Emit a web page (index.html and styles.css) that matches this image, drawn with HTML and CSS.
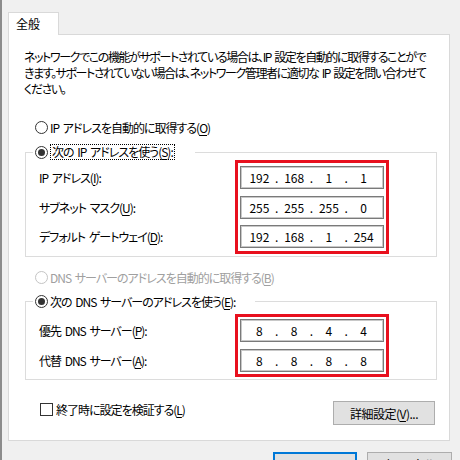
FILE: index.html
```html
<!DOCTYPE html>
<html lang="ja">
<head>
    <meta charset="UTF-8">
    <title>インターネット プロトコル バージョン 4 (TCP/IPv4) のプロパティ</title>
    <link rel="stylesheet" href="styles.css">
</head>
<body>
    <div class="window">
        <div class="tabs">
            <div class="tab">全般</div>
        </div>
        <div class="panel">
            <p class="intro">ネットワークでこの機能がサポートされている場合は、IP 設定を自動的に取得することがで<br>きます。サポートされていない場合は、ネットワーク管理者に適切な IP 設定を問い合わせて<br>ください。</p>

            <label class="option first">
                <input type="radio" name="ip-mode">
                <span>IP アドレスを自動的に取得する(<u>O</u>)</span>
            </label>

            <fieldset class="group ip-group">
                <legend>
                    <label class="option">
                        <input type="radio" name="ip-mode" checked>
                        <span class="focus">次の IP アドレスを使う(<u>S</u>):</span>
                    </label>
                </legend>
                <div class="group-body">
                    <div class="labels">
                        <div class="label-row">IP アドレス(<u>I</u>):</div>
                        <div class="label-row">サブネット マスク(<u>U</u>):</div>
                        <div class="label-row">デフォルト ゲートウェイ(<u>D</u>):</div>
                    </div>
                    <div class="marked">
                        <div class="ip-field"><span>192</span><span>.</span><span>168</span><span>.</span><span>1</span><span>.</span><span>1</span></div>
                        <div class="ip-field"><span>255</span><span>.</span><span>255</span><span>.</span><span>255</span><span>.</span><span>0</span></div>
                        <div class="ip-field"><span>192</span><span>.</span><span>168</span><span>.</span><span>1</span><span>.</span><span>254</span></div>
                    </div>
                </div>
            </fieldset>

            <label class="option dns-auto disabled">
                <input type="radio" name="dns-mode" disabled>
                <span>DNS サーバーのアドレスを自動的に取得する(<u>B</u>)</span>
            </label>

            <fieldset class="group dns-group">
                <legend>
                    <label class="option">
                        <input type="radio" name="dns-mode" checked>
                        <span>次の DNS サーバーのアドレスを使う(<u>E</u>):</span>
                    </label>
                </legend>
                <div class="group-body">
                    <div class="labels">
                        <div class="label-row">優先 DNS サーバー(<u>P</u>):</div>
                        <div class="label-row">代替 DNS サーバー(<u>A</u>):</div>
                    </div>
                    <div class="marked">
                        <div class="ip-field"><span>8</span><span>.</span><span>8</span><span>.</span><span>4</span><span>.</span><span>4</span></div>
                        <div class="ip-field"><span>8</span><span>.</span><span>8</span><span>.</span><span>8</span><span>.</span><span>8</span></div>
                    </div>
                </div>
            </fieldset>

            <div class="panel-footer">
                <label class="check">
                    <input type="checkbox">
                    <span>終了時に設定を検証する(<u>L</u>)</span>
                </label>
                <button class="btn advanced">詳細設定(<u>V</u>)...</button>
            </div>
        </div>

        <div class="dialog-buttons">
            <button class="btn default">OK</button>
            <button class="btn">キャンセル</button>
        </div>
    </div>
</body>
</html>
```

FILE: styles.css
```css
body {
    margin: 0;
    background: #f0f0f0;
    font-family: "Noto Sans CJK JP", "Noto Sans", sans-serif;
    font-size: 12px;
    letter-spacing: -1px;
    word-spacing: 2px;
    font-feature-settings: "palt";
    color: #000;
    height: 460px;
    overflow: hidden;
}

.window {
    box-sizing: border-box;
    height: 460px;
    border-left: 2px solid #8c8c8c;
    padding: 12px 10px 0 6px;
}

u {
    text-decoration-thickness: 1px;
    text-underline-offset: 2px;
}

/* tab strip */
.tabs {
    display: flex;
}

.tab {
    position: relative;
    box-sizing: border-box;
    width: 51px;
    height: 23px;
    margin-bottom: -1px;
    padding-left: 7px;
    line-height: 21px;
    letter-spacing: 0;
    background: #fff;
    border: 1px solid #d9d9d9;
    border-bottom: none;
}

.panel {
    background: #fff;
    border: 1px solid #d9d9d9;
    padding: 14px 12px 15px 15px;
}

.intro {
    margin: 0;
    line-height: 16px;
    white-space: nowrap;
    letter-spacing: -1.4px;
}

/* radios and checkbox */
.option {
    display: flex;
    align-items: center;
    gap: 2px;
    height: 16px;
    white-space: nowrap;
}

.option.first {
    margin: 22px 0 0 11px;
}

.option input,
.check input {
    appearance: none;
    -webkit-appearance: none;
    box-sizing: border-box;
    width: 13px;
    height: 13px;
    margin: 0;
    background: #fff;
    border: 1px solid #333;
    flex: none;
}

.option input {
    border-radius: 50%;
    display: grid;
    place-items: center;
}

.option input:checked::after {
    content: "";
    width: 7px;
    height: 7px;
    border-radius: 50%;
    background: #333;
}

.option.disabled {
    color: #a0a0a0;
}

.option.disabled input {
    border-color: #c4c4c4;
}

.focus {
    border: 1px dotted #000;
    line-height: 14px;
    padding: 0 1px;
}

/* group boxes */
.group {
    margin: 9px 0 0 1px;
    padding: 0 47px 2px 13px;
    border: 1px solid #dcdcdc;
    min-width: 0;
}

.group legend {
    margin-left: -6px;
    padding: 0 20px 0 2px;
}

.dns-group {
    margin-top: 8px;
    padding-top: 5px;
}

.group-body {
    display: flex;
    justify-content: space-between;
}

.labels {
    display: flex;
    flex-direction: column;
    gap: 6.5px;
    padding-top: 6px;
}

.label-row {
    height: 23px;
    line-height: 23px;
    white-space: nowrap;
}

.marked {
    display: flex;
    flex-direction: column;
    gap: 6.5px;
    padding: 3px 2px;
    border: 3px solid #e8101e;
}

.dns-group .labels {
    gap: 7px;
    padding-top: 5px;
}

.dns-group .marked {
    gap: 7px;
    padding: 2px;
}

.ip-field {
    box-sizing: border-box;
    width: 144px;
    height: 23px;
    padding: 0 5px 0 4px;
    display: grid;
    grid-template-columns: 1fr 6px 1fr 6px 1fr 6px 1fr;
    align-items: center;
    text-align: center;
    letter-spacing: 0;
    background: #fff;
    border: 1px solid #7a7a7a;
    box-shadow: inset 0 0 0 1px #c8c8c8;
}

.dns-auto {
    margin: 12px 0 0 11px;
}

/* footer */
.panel-footer {
    display: flex;
    justify-content: space-between;
    align-items: flex-start;
    margin-top: 21px;
}

.check {
    display: flex;
    align-items: center;
    gap: 3px;
    height: 16px;
    margin-left: 16px;
}

.btn {
    box-sizing: border-box;
    height: 23px;
    padding: 0;
    font: inherit;
    letter-spacing: -0.5px;
    color: #000;
    background: #e1e1e1;
    border: 1px solid #adadad;
}

.advanced {
    width: 102px;
    height: 24px;
    margin-right: 2px;
}

.dialog-buttons {
    display: flex;
    justify-content: flex-end;
    gap: 10px;
    margin: 11px -2px 0 0;
}

.dialog-buttons .btn {
    width: 85px;
}

.btn.default {
    width: 84px;
    border-color: #0078d7;
    box-shadow: inset 0 0 0 1px #0078d7;
}
```
